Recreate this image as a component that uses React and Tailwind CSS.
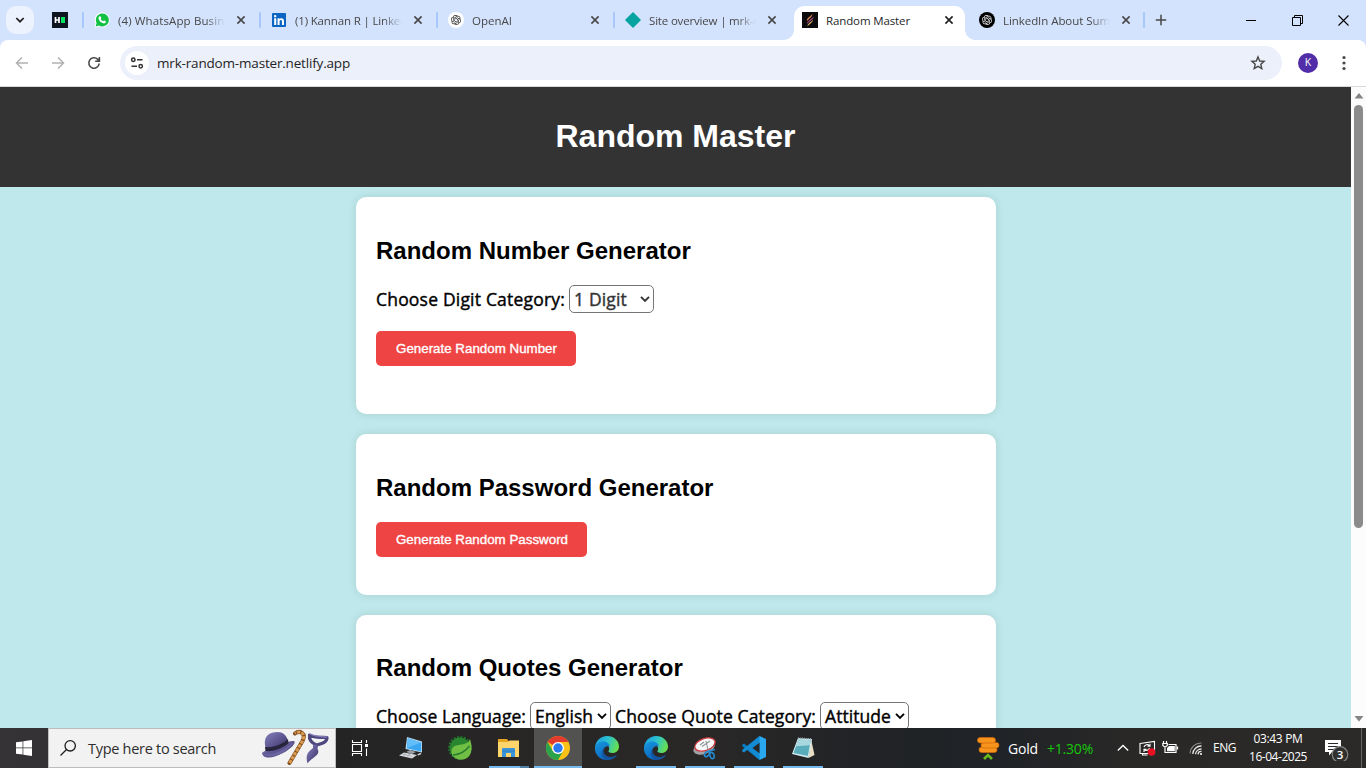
import { useLayoutEffect, useRef } from "react";
import { FaLinkedin } from "react-icons/fa";
import { RiOpenaiFill } from "react-icons/ri";

/* Single line of text whose tracking is tuned so that it spans `w` pixels. */
function Fit({ w, className = "", children }) {
  const ref = useRef(null);
  useLayoutEffect(() => {
    const el = ref.current;
    el.style.letterSpacing = "0px";
    const natural = el.getBoundingClientRect().width;
    el.style.letterSpacing = `${(w - natural) / el.textContent.length}px`;
  }, [w, children]);
  return (
    <span ref={ref} className={`inline-block shrink-0 whitespace-nowrap ${className}`}>
      {children}
    </span>
  );
}

const WhatsAppIcon = () => (
  <svg viewBox="0 0 16 16" className="size-4">
    <path d="M1 15.2 2 11.4A7 7 0 1 1 4.8 14.1Z" fill="#fff" stroke="#fff" strokeWidth="1" />
    <path d="M1.6 14.4 2.6 11A6.5 6.5 0 1 1 5 13.5Z" fill="#12c143" />
    <path d="M5.6 4.3c.3-.3.8-.2 1 .2l.6 1.3c.1.3 0 .6-.5 1.1.6 1.1 1.4 1.8 2.5 2.3.5-.6.8-.8 1.1-.6l1.3.6c.4.3.4.6.2 1-.5 1-1.600 1.400-2.700 1.100-2.100-.6-3.700-2-4.500-4.200-.300-1.100.1-2.100 1-2.800Z" fill="#fff" />
  </svg>
);

const FlameIcon = () => (
  <svg viewBox="0 0 16 16" className="size-4">
    <path d="M0 0h16v16H0z" fill="#0b0a0d" />
    <path d="M5 9C4.500 6 7.800 5 10.500 2 10.300 5 8 6 5 9Z" fill="#d9824a" />
    <path d="M5 12c0-3 3.500-4 6.600-7.500C11.400 8.400 7.500 9 5 12Z" fill="#9a4a80" />
    <path d="M5.500 14.500C5.500 11.500 8.500 10.500 11 8c-.3 3-3.500 3.500-5.500 6.500Z" fill="#e0b060" />
  </svg>
);

const Close = ({ dark }) => (
  <svg viewBox="0 0 16 16" className="size-4 shrink-0">
    <path d="M4.400 4.400l7.200 7.200M11.600 4.400l-7.200 7.200" stroke={dark ? "#1f1f1f" : "#474747"} strokeWidth="1.600" />
  </svg>
);

function Tab({ icon, w, title, active }) {
  return (
    <div className="flex h-7 w-[175px] items-center pl-[10px]">
      <div className="flex size-4 shrink-0 items-center justify-center">{icon}</div>
      <div
        className={`ml-2 flex w-[107px] shrink-0 overflow-hidden pt-[2px] text-[11.500px] leading-5 ${
          active
            ? "text-[#1f1f1f]"
            : "text-[#474747] [mask-image:linear-gradient(to_right,#000_88px,transparent_107px)]"
        }`}
      >
        <Fit w={w}>{title}</Fit>
      </div>
      <div className="ml-[8px] flex"><Close dark={active} /></div>
    </div>
  );
}

const Sep = () => <div className="h-4 w-[2px] shrink-0 rounded-full bg-[#a8c7fa]" />;

function TabStrip() {
  return (
    <div className="flex h-10 bg-[#d3e3fd] pt-[6px]">
      <div className="ml-[6px] flex size-7 shrink-0 items-center justify-center rounded-[10px] bg-[#ecf2fe]">
        <svg viewBox="0 0 10 10" className="size-[10px]">
          <path d="M1.300 3 5 6.700 8.700 3" fill="none" stroke="#1f1f1f" strokeWidth="1.700" />
        </svg>
      </div>
      <div className="flex h-7 items-center">
        <svg viewBox="0 0 16 16" className="mr-[14px] ml-[18px] size-4">
          <path d="M0 0h16v16H0z" fill="#0e141e" />
          <path d="M3.500 5v6M7 5v6M3.500 8H7" stroke="#fff" strokeWidth="1.700" fill="none" />
          <path d="M9 5h4v6H9z" fill="#05e25f" />
        </svg>
        <Sep />
        <Tab icon={<WhatsAppIcon />} title="(4) WhatsApp Busine" w={113} />
        <Sep />
        <Tab
          icon={
            <span className="flex size-[14px] items-center justify-center bg-white">
              <FaLinkedin className="size-4 shrink-0 text-[#0a66c2]" />
            </span>
          }
          title="(1) Kannan R | Linked"
          w={112}
        />
        <Sep />
        <Tab
          icon={
            <span className="flex size-4 items-center justify-center rounded-full bg-white">
              <RiOpenaiFill className="size-3 text-[#222]" />
            </span>
          }
          title="OpenAI"
          w={40}
        />
        <Sep />
        <Tab
          icon={
            <svg viewBox="0 0 16 16" className="size-4">
              <path d="M8 1 15 8 8 15 1 8Z" fill="#05a4a0" stroke="#05a4a0" strokeWidth="1.500" strokeLinejoin="round" />
            </svg>
          }
          title="Site overview | mrk-r"
          w={109}
        />
      </div>
      <div className="ml-[-6px] flex h-[34px] items-end">
        <div className="size-[10px] bg-[radial-gradient(circle_at_0_0,transparent_9.500px,#fff_10px)]" />
        <div className="flex h-[34px] w-[171px] items-start rounded-t-[10px] bg-white">
          <div className="ml-[-2px] flex"><Tab icon={<FlameIcon />} title="Random Master" w={84} active /></div>
        </div>
        <div className="size-[10px] bg-[radial-gradient(circle_at_100%_0,transparent_9.500px,#fff_10px)]" />
      </div>
      <div className="ml-[-6px] flex h-7 items-center">
        <Tab
          icon={
            <span className="flex size-4 items-center justify-center rounded-full bg-black">
              <RiOpenaiFill className="size-3 text-white" />
            </span>
          }
          title="LinkedIn About Sum"
          w={107}
        />
        <div className="ml-[-1px] flex"><Sep /></div>
        <svg viewBox="0 0 12 12" className="ml-[10px] size-3">
          <path d="M6 .8v10.400M.8 6h10.400" stroke="#474747" strokeWidth="1.500" />
        </svg>
      </div>
      <div className="mr-[17px] ml-auto flex h-7 items-center gap-[35px]">
        <svg viewBox="0 0 11 11" className="size-[11px]"><path d="M0 5.500h10" stroke="#000" /></svg>
        <svg viewBox="0 0 11 11" className="size-[11px]">
          <path d="M.5 2.500h8v8h-8zM2.500 2.500v-2h8v8h-2" fill="none" stroke="#000" />
        </svg>
        <svg viewBox="0 0 11 11" className="size-[11px]">
          <path d="M.5.5l10 10M10.500.5l-10 10" stroke="#000" strokeWidth="1.100" />
        </svg>
      </div>
    </div>
  );
}

function Toolbar() {
  return (
    <div className="bg-[#d3e3fd]">
      <div className="flex h-[47px] items-center rounded-t-lg border-b border-[#d9d9dc] bg-white">
        <svg viewBox="0 0 16 16" className="ml-[14px] size-4">
          <path d="M14 8H3M8 2.500 2.500 8 8 13.500" fill="none" stroke="#b1b1b1" strokeWidth="1.500" />
        </svg>
        <svg viewBox="0 0 16 16" className="ml-5 size-4">
          <path d="M2 8h11M8 2.500 13.500 8 8 13.500" fill="none" stroke="#b1b1b1" strokeWidth="1.500" />
        </svg>
        <svg viewBox="0 0 16 16" className="ml-5 size-4">
          <path d="M13.200 8.500A5.200 5.200 0 1 1 11.800 4.400L13.300 5.900M13.400 2v4.200H9.200" fill="none" stroke="#474747" strokeWidth="1.600" />
        </svg>
        <div className="ml-[18px] flex h-[34px] w-[1162px] items-center rounded-full bg-[#ecf0fa] pl-[5px]">
          <div className="flex size-6 items-center justify-center rounded-full bg-white">
            <svg viewBox="0 0 14 12" className="h-3 w-[14px]">
              <g fill="none" stroke="#333" strokeWidth="1.500">
                <circle cx="3.300" cy="2.700" r="1.700" />
                <path d="M7 2.700h5.500M1.500 9.300H7" />
                <circle cx="10.700" cy="9.300" r="1.700" />
              </g>
            </svg>
          </div>
          <Fit w={193} className="ml-2 text-[13.500px] leading-5 text-[#1f1f1f]">mrk-random-master.netlify.app</Fit>
          <svg viewBox="0 0 16 16" className="mr-4 ml-auto size-4">
            <path d="M8 1.900 9.700 6l4.400.4-3.300 2.900 1 4.300L8 11.300l-3.800 2.300 1-4.300L1.900 6.400 6.300 6Z" fill="none" stroke="#474747" strokeWidth="1.400" />
          </svg>
        </div>
        <div className="ml-4 flex size-5 items-center justify-center rounded-full bg-[#512da8] text-[10.500px] text-white">K</div>
        <svg viewBox="0 0 4 16" className="ml-6 h-4 w-1" fill="#474747">
          <circle cx="2" cy="2.500" r="1.600" /><circle cx="2" cy="8" r="1.600" /><circle cx="2" cy="13.500" r="1.600" />
        </svg>
      </div>
    </div>
  );
}

function Select({ label, w, box, muted }) {
  return (
    <button
      className={`flex h-7 shrink-0 items-center justify-between rounded-[5px] border border-[#767676] bg-white pr-[3px] pl-[4px] ${box} ${
        muted ? "text-[#333]" : "text-black"
      }`}
    >
      <Fit w={w}>{label}</Fit>
      <svg viewBox="0 0 10 10" className="size-[10px]">
        <path d="M1 2.800 5 6.800 9 2.800" fill="none" stroke="currentColor" strokeWidth="1.900" />
      </svg>
    </button>
  );
}

function Card({ title, height, heading = "mt-5", children }) {
  return (
    <section className={`w-[640px] shrink-0 rounded-[10px] bg-white p-5 shadow-[0_0_10px_rgba(0,0,0,0.1)] ${height}`}>
      <h2 className={`font-['Liberation_Sans',sans-serif] text-[24px] leading-[27px] font-bold text-black ${heading}`}>{title}</h2>
      {children}
    </section>
  );
}

const RedButton = ({ w, textW, children }) => (
  <button className={`flex h-[35px] items-center justify-center rounded-[5px] bg-[#ef4444] pl-px font-['Liberation_Sans',sans-serif] text-[13.333px] text-white ${w}`}>
    <Fit w={textW} className="[-webkit-text-stroke:0.35px_#fff]">{children}</Fit>
  </button>
);

function Page() {
  return (
    <div className="flex h-[641px] overflow-hidden">
      <main className="flex w-[1351px] flex-col items-center bg-[#bee8eb]">
        <header className="flex h-[100px] w-full shrink-0 items-center justify-center bg-[#333]">
          <h1 className="pb-px font-['Liberation_Sans',sans-serif] text-[32px] leading-[37px] font-bold text-white">Random Master</h1>
        </header>
        <div className="mt-[10px] ml-px flex flex-col gap-5">
          <Card title="Random Number Generator" height="h-[217px]">
            <div className="mt-[21px] flex h-7 items-center gap-[4px] text-[17.500px] text-black [-webkit-text-stroke:0.4px]">
              <Fit w={189}>Choose Digit Category:</Fit>
              <Select label="1 Digit" w={53} box="w-[85px]" muted />
            </div>
            <div className="mt-[18px]"><RedButton w="w-[200px]" textW={161}>Generate Random Number</RedButton></div>
          </Card>
          <Card title="Random Password Generator" height="h-[161px]">
            <div className="mt-[21px]"><RedButton w="w-[211px]" textW={172}>Generate Random Password</RedButton></div>
          </Card>
          <Card title="Random Quotes Generator" height="h-[217px]" heading="mt-[19px]">
            <div className="mt-[21px] flex h-7 items-center gap-[4px] text-[17.500px] text-black [-webkit-text-stroke:0.4px]">
              <Fit w={150}>Choose Language:</Fit>
              <Select label="English" w={58} box="w-[81px]" />
              <Fit w={201}>Choose Quote Category:</Fit>
              <Select label="Attitude" w={66} box="w-[89px]" />
            </div>
          </Card>
        </div>
      </main>
      <div className="flex w-[15px] flex-col items-center bg-[#fcfcfc]">
        <svg viewBox="0 0 10 6" className="mt-[6px] h-[6px] w-[10px]"><path d="M5 0 9.500 5.500H.5Z" fill="#858585" /></svg>
        <div className="mt-[6px] h-[423px] w-[9px] rounded-full bg-[#8b8b8b]" />
        <svg viewBox="0 0 10 6" className="mt-auto mb-[6px] h-[6px] w-[10px]"><path d="M5 5.500 9.500 0H.5Z" fill="#858585" /></svg>
      </div>
    </div>
  );
}

const HatCaneScarf = () => (
  <svg viewBox="0 0 70 38" className="h-[38px] w-[70px]">
    <defs>
      <linearGradient id="felt" x1="0" y1="0" x2="1" y2="1">
        <stop offset="0" stopColor="#8580bd" /><stop offset=".55" stopColor="#5b548f" /><stop offset="1" stopColor="#343052" />
      </linearGradient>
    </defs>
    <path d="M1 24c4-4 28-13 32-12 3 1-3 8-11 12-9 5-20 7-21 0Z" fill="url(#felt)" />
    <path d="M5 20C2 11 5 5 12 3.500c8-2 13 1 15 8-5 6-14 10-22 8.500Z" fill="url(#felt)" />
    <path d="M4 18c9 1 18-3 23-8l.5 4C22 19 13 23 4.500 22Z" fill="#28243d" />
    <path d="M2 25c8 2 21-3 30-12-3 9-22 19-30 12Z" fill="#6c66a2" />
    <path d="M28.500 34 41.500 12c4-8-3-11-7.500-7.500" fill="none" stroke="#7a481f" strokeWidth="4" strokeLinecap="round" />
    <path d="M28.500 34 41.500 12c4-8-3-11-7.500-7.500" fill="none" stroke="#d99a4e" strokeWidth="3" strokeDasharray="3.500 1" />
    <path d="M48.500 6c5 3.500 12 2 17.500 2.500 0 5-5 6-10.500 7.500-5-2-7.500-6-7-10Z" fill="none" stroke="#4d477e" strokeWidth="3.200" strokeLinejoin="round" />
    <path d="M49 5c6 3 12 2.500 17 3" fill="none" stroke="#807ab5" strokeWidth="1.300" />
    <path d="m52 15.500 5 .5-.5 4c3.500 6-5 8-10 14.500-2-8-.5-11 5.500-15.500Z" fill="url(#felt)" />
  </svg>
);

const Edge = ({ id }) => (
  <svg viewBox="0 0 24 24" className="size-6">
    <defs>
      <linearGradient id={`${id}a`} x1="0" y1=".2" x2="1" y2=".5">
        <stop offset="0" stopColor="#1c9be2" /><stop offset=".5" stopColor="#2cc3cf" /><stop offset="1" stopColor="#68e04c" />
      </linearGradient>
      <linearGradient id={`${id}b`} x1="0" y1="0" x2=".5" y2="1">
        <stop offset="0" stopColor="#1698e0" /><stop offset="1" stopColor="#0c65bd" />
      </linearGradient>
    </defs>
    <path d="M0 11.500C.5 5 5.500 0 12 0c7 0 12 5 12 10.500 0 4-3 6.500-6.500 6.500-3 0-4.500-1.200-4-2 1.500-2 1-6.500-4.500-6.500C4 8 1 9.500 0 11.500Z" fill={`url(#${id}a)`} />
    <path d="M0 12c.5-4 4.500-6.500 8.500-6.500 4 0 6.500 3 6 5-5-1.500-8 4-5 8.500 2 3.500 5.500 4.600 6.500 4.400C7 26-.500 19.500 0 12Z" fill={`url(#${id}b)`} />
    <path d="M8.800 12c-2 6.500 4.500 10.500 9.500 8.500 1.500-.5 3.200-1.500 4-2-2 4-6.300 5.700-9.300 5.400-5-.4-8.500-6.900-4.200-11.900Z" fill="#15549f" />
  </svg>
);

const Chrome = () => (
  <svg viewBox="0 0 24 24" className="size-6">
    <circle cx="12" cy="12" r="12" fill="#fbc116" />
    <path d="M12 12 1.600 6A12 12 0 0 1 22.400 6H12Z" fill="#e33b2e" />
    <path d="M1.600 6A12 12 0 0 0 12 24l5.200-9L12 18 6.800 15Z" fill="#2ba24c" />
    <circle cx="12" cy="12" r="6" fill="#fff" />
    <circle cx="12" cy="12" r="4.700" fill="#2a79ee" />
  </svg>
);

const RemotePc = () => (
  <svg viewBox="0 0 24 24" className="size-6">
    <path d="m8 1 15 4.500v11L6.500 13Z" fill="#b9dcf0" />
    <path d="m8.800 2.200 13.400 4.200v9L7.800 12.200Z" fill="#3ba7f3" />
    <path d="m8.800 2.200 13.400 4.200-14 5.300Z" fill="#62bdf8" />
    <path d="m11 14 6 2-4 2-6-2Z" fill="#9a9da3" />
    <path d="m5 16.500 13 2.500-5 3.500-13-3Z" fill="#d7dade" />
    <path d="m3.500 18.300 9.500 2M7 17.300l-3 2M11 18.200l-3 2" stroke="#989ba0" strokeWidth=".6" />
    <path d="m18 18.500 3.500-1.700 1 1.200-3 1.500Z" fill="#c8cbd0" />
  </svg>
);

const Spring = () => (
  <svg viewBox="0 0 24 24" className="size-6">
    <circle cx="12" cy="12" r="10.800" fill="none" stroke="#22772e" strokeWidth="2.200" strokeDasharray="2 1.400" />
    <circle cx="12" cy="12" r="10.400" fill="#28862f" />
    <path d="M22 3c3 9 2 19-7 20.500C8 24.500 2.500 20 3.500 14.500 4.500 8.500 10 9.500 16 8c3-.8 5-2 6-5Z" fill="#71be44" />
    <path d="M5 19c6-.5 12-3 16.500-9" fill="none" stroke="#277f2f" strokeWidth="1.500" />
  </svg>
);

const Explorer = () => (
  <svg viewBox="0 0 24 24" className="size-6">
    <path d="M1 3h9l1.500 2H22v15H1Z" fill="#e6a520" />
    <path d="M1 6h10l1.500-1.500H22V21H1Z" fill="#fdd56b" />
    <path d="M5 21v-8q0-1 1-1h11q1 0 1 1v8h-4v-4H9v4Z" fill="#3a94d9" />
    <path d="M5 15h13" stroke="#2576b5" strokeWidth=".7" />
  </svg>
);

const Snip = () => (
  <svg viewBox="0 0 24 24" className="size-6">
    <ellipse cx="11" cy="12" rx="11" ry="6" transform="rotate(-19 11 12)" fill="#a0a1a5" />
    <ellipse cx="12" cy="8.500" rx="10.500" ry="6" transform="rotate(-19 12 8.500)" fill="#f8f8f8" stroke="#cf3940" strokeWidth="1.300" />
    <path d="m7 9 4-3M9 10.500l8-5.500M13 5l2 9" fill="none" stroke="#8f969c" strokeWidth="1.100" />
    <g fill="none" stroke="#248bd1" strokeWidth="1.600">
      <ellipse cx="14" cy="18" rx="2" ry="3" transform="rotate(45 14 18)" />
      <ellipse cx="19" cy="19.500" rx="2" ry="3.200" transform="rotate(-20 19 19.500)" />
      <path d="m16 15 6-1.500" />
    </g>
  </svg>
);

const VsCode = () => (
  <svg viewBox="0 0 24 24" className="size-6">
    <path d="M17.500 0 6 10.800 2 7.600.3 8.600v1.600L17.500 24l1-6.800Z" fill="#0879be" />
    <path d="M17.500 24 6 13.200l-4 3.200-1.700-1v-1.600L17.500 0l1 6.800Z" fill="#128bd2" />
    <path d="M17.500 0 24 3v18l-6.500 3V0Z" fill="#29a8ef" />
    <path d="m17.500 6.800-7 5.200 7 5.200Z" fill="#292625" />
  </svg>
);

const Notepad = () => (
  <svg viewBox="0 0 24 24" className="size-6">
    <path d="m20 3 3.500 16-6 3Z" fill="#e7ddc4" />
    <path d="m7 2 14 1-3.500 19L1 18Z" fill="#d5edf2" />
    <path d="m7.500 3.500 12.300.8-3 15.700L2.500 17Z" fill="#59adba" />
    <path d="m7.500 3.500 12.300.8-1 5-14 1Z" fill="#a9d7df" />
    <path d="m7 2 14 1" stroke="#8b9a9e" strokeWidth="1.500" strokeDasharray="1 1" />
  </svg>
);

function TaskItem({ children, active, bar }) {
  return (
    <div className={`flex h-10 w-12 shrink-0 flex-col items-center ${active ? "bg-[#525251]" : ""}`}>
      <div className="mt-2 flex size-6">{children}</div>
      {bar && <div className={`mt-auto h-[2px] bg-[#76b9ed] ${active ? "w-12" : "w-10"}`} />}
    </div>
  );
}

function Taskbar() {
  return (
    <footer className="flex h-10 bg-[linear-gradient(to_right,#353336_0,#252424_340px,#2a2827_700px,#212326_860px,#202327_1000px,#292827_1130px,#2c2a29_1366px)] text-white">
      <div className="flex w-12 shrink-0 items-center justify-center">
        <svg viewBox="0 0 16 16" className="size-4" fill="#fff">
          <path d="M0 2.300 6.600 1.400v6.200H0ZM7.300 1.300 16 0v7.600H7.300ZM0 8.300h6.600v6.300L0 13.700ZM7.300 8.300H16V16l-8.700-1.300Z" />
        </svg>
      </div>
      <div className="flex w-72 shrink-0 items-center border border-[#bdbdbd] bg-[#f2f2f2]">
        <svg viewBox="0 0 18 18" className="ml-[10px] size-[18px]">
          <circle cx="11.200" cy="6.800" r="5.200" fill="none" stroke="#1c1c1c" strokeWidth="1.300" />
          <path d="m7.500 10.500-6 6" stroke="#1c1c1c" strokeWidth="1.300" />
        </svg>
        <Fit w={128} className="ml-[11px] pt-[2px] text-[14.500px] text-[#2e2e2e]">Type here to search</Fit>
        <div className="mr-[4px] ml-auto"><HatCaneScarf /></div>
      </div>
      <div className="flex w-[51px] shrink-0 items-center pl-[15px]">
        <svg viewBox="0 0 18 16" className="h-4 w-[18px]" fill="none" stroke="#fff" strokeWidth="1.100">
          <path d="M1.500 4.500h9v7h-9zM1.500 0v2.500h9V0M1.500 16v-2.500h9V16M15.500 0v3M15.500 8.500V16" />
          <path d="M14 4h3v3h-3z" fill="#fff" stroke="none" />
        </svg>
      </div>
      <div className="flex gap-px">
        <TaskItem><RemotePc /></TaskItem>
        <TaskItem><Spring /></TaskItem>
        <div className="flex h-10 w-12 shrink-0 flex-col items-center">
          <div className="mt-2 flex size-6"><Explorer /></div>
          <div className="mt-auto flex h-[2px] w-10">
            <div className="w-[31px] bg-[#76b9ed]" /><div className="w-[9px] bg-[#527fa5]" />
          </div>
        </div>
        <TaskItem active bar><Chrome /></TaskItem>
        <TaskItem><Edge id="e1" /></TaskItem>
        <TaskItem bar><Edge id="e2" /></TaskItem>
        <TaskItem bar><Snip /></TaskItem>
        <TaskItem bar><VsCode /></TaskItem>
        <TaskItem bar><Notepad /></TaskItem>
      </div>
      <div className="ml-auto flex items-center">
        <svg viewBox="0 0 24 24" className="size-6">
          <g fill="#f7941d" stroke="#cf6607" strokeWidth=".7">
            <rect x="3" y="11" width="18" height="5.500" rx="2.700" />
            <rect x="5" y="6.500" width="18" height="5.500" rx="2.700" />
            <rect x="1.500" y="1.500" width="18" height="5.500" rx="2.700" />
          </g>
          <path d="m8 23 4-4 4 4" fill="none" stroke="#6ab91d" strokeWidth="2.600" />
        </svg>
        <Fit w={30} className="ml-2 text-[14px]">Gold</Fit>
        <Fit w={46} className="ml-[9px] text-[14px] text-[#16c60c]">+1.30%</Fit>
        <svg viewBox="0 0 12 8" className="ml-6 h-2 w-3"><path d="m.8 6.500 5.200-5 5.200 5" fill="none" stroke="#fff" strokeWidth="1.300" /></svg>
        <svg viewBox="0 0 17 16" className="ml-[10px] h-4 w-[17px]">
          <path d="m1 3.500 14.500-2v12L1 13.500ZM3.500 13.500v1.500h5" fill="none" stroke="#fff" strokeWidth="1.100" />
          <path d="M5 7a3.200 3.200 0 0 1 5.500-1.200M11 3.800v2.500H8.500M10.500 8a3.200 3.200 0 0 1-5.300 1.500M5 12V9.300h2.500" fill="none" stroke="#fff" strokeWidth="1.100" />
          <circle cx="12.500" cy="12" r="3.800" fill="#e81123" />
        </svg>
        <svg viewBox="0 0 17 14" className="ml-[6px] h-[14px] w-[17px]" fill="none" stroke="#fff" strokeWidth="1.200">
          <path d="M1.500 0v2M4.500 0v2M.8 2.500h4.500v2L3 6.200.8 4.500ZM3 6v5.500h11V3.500H6.500M15.500 5.500v3" />
          <path d="M7 5h5.800v5.200H5V7Z" fill="#fff" stroke="none" />
        </svg>
        <svg viewBox="0 0 14 14" className="ml-[10px] size-[14px]" fill="none">
          <path d="M1 12.500A11 11 0 0 1 12.500 2" stroke="#8d8d8d" strokeWidth="1.100" />
          <path d="M3.800 13A8.300 8.300 0 0 1 12.500 5M6.500 13.200a5.700 5.700 0 0 1 6-5.200M9 13.300A3.200 3.200 0 0 1 12.500 10.500" stroke="#e8e8e8" strokeWidth="1.300" />
          <circle cx="12" cy="13" r="1" fill="#fff" />
        </svg>
        <Fit w={23} className="ml-[10px] text-[12px]">ENG</Fit>
        <div className="ml-[13px] flex w-[58px] flex-col items-center text-[12px] leading-[18px]">
          <Fit w={49}>03:43 PM</Fit>
          <Fit w={58}>16-04-2025</Fit>
        </div>
        <svg viewBox="0 0 26 26" className="ml-[17px] size-[26px]">
          <path d="M1 5h16v12H8l-3 3.500V17H1Z" fill="#fff" />
          <path d="M4 8.500h10M4 11.500h10M4 14.500h6" stroke="#2c2a29" />
          <circle cx="16" cy="19.500" r="7.800" fill="#30302f" stroke="#858585" strokeWidth="1.200" />
          <text x="16" y="23.500" textAnchor="middle" className="fill-white font-['Open_Sans',sans-serif] text-[11.500px] font-semibold">3</text>
        </svg>
        <div className="mr-1 ml-[11px] h-10 w-px bg-[#686765]" />
      </div>
    </footer>
  );
}

export default function App() {
  return (
    <div className="flex h-[768px] w-[1366px] flex-col overflow-hidden font-['Open_Sans','Noto_Sans',sans-serif]">
      <TabStrip />
      <Toolbar />
      <Page />
      <Taskbar />
    </div>
  );
}
